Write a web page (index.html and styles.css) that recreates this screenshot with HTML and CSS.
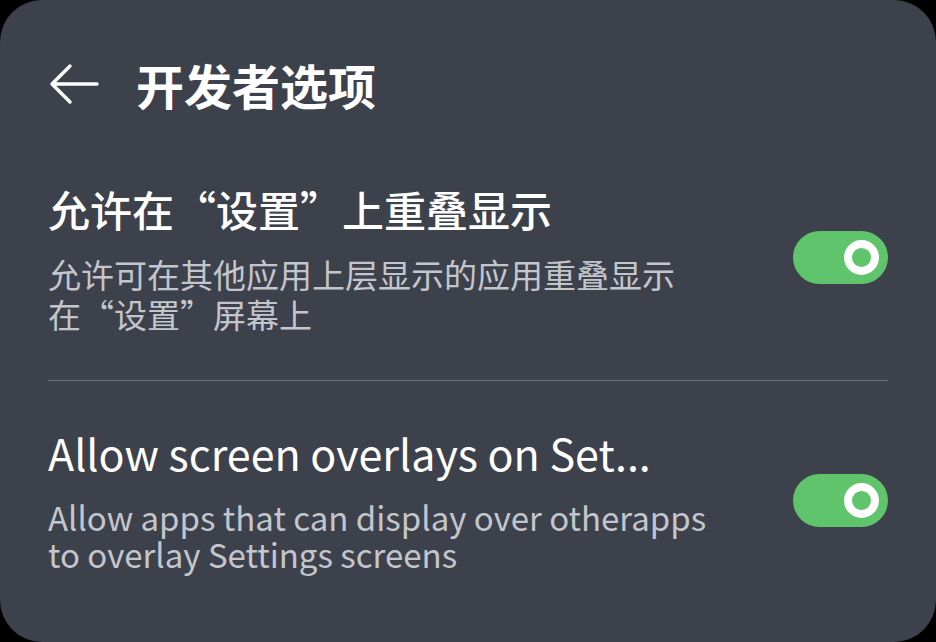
FILE: index.html
```html
<!DOCTYPE html>
<html lang="zh-CN">
<head>
<meta charset="utf-8">
<title>开发者选项</title>
<link rel="stylesheet" href="styles.css">
</head>
<body>
<div class="card">
  <header class="header">
    <svg class="back" width="50" height="42" viewBox="0 0 50 42" aria-hidden="true">
      <path d="M48 21H3M21 3L3 21L21 39" fill="none" stroke="#fff" stroke-width="3.4" stroke-linecap="round" stroke-linejoin="round"/>
    </svg>
    <h1 class="title">开发者选项</h1>
  </header>
  <div class="row row-first">
    <div class="text">
      <div class="row-title">允许在“设置”上重叠显示</div>
      <div class="row-sub">允许可在其他应用上层显示的应用重叠显示<br>在“设置”屏幕上</div>
    </div>
    <div class="toggle"><span class="knob"></span></div>
  </div>
  <div class="divider"></div>
  <div class="row row-second">
    <div class="text">
      <div class="row-title en">Allow screen overlays on Set...</div>
      <div class="row-sub en">Allow apps that can display over otherapps<br>to overlay Settings screens</div>
    </div>
    <div class="toggle"><span class="knob"></span></div>
  </div>
</div>
</body>
</html>
```
FILE: styles.css
```css
* { box-sizing: border-box; }
html, body {
  margin: 0;
  padding: 0;
  background: #000;
  width: 936px;
  height: 642px;
  overflow: hidden;
}
body {
  font-family: "Noto Sans CJK SC", "Noto Sans", sans-serif;
  color: #fff;
}
.card {
  width: 936px;
  height: 642px;
  background: #3d414c;
  border-radius: 42px;
  padding: 56px 48px 0 48px;
  display: flex;
  flex-direction: column;
}
.header {
  display: flex;
  align-items: center;
  height: 56px;
}
.back {
  margin-left: 1px;
  flex: none;
}
.title {
  margin: 0 0 0 37px;
  font-size: 48px;
  font-weight: 700;
  line-height: 56px;
}
.row {
  display: flex;
  align-items: flex-start;
  justify-content: space-between;
}
.row-first { margin-top: 71px; }
.row-second { margin-top: 45px; }
.row-title {
  font-size: 42px;
  line-height: 52px;
  font-weight: 500;
  color: #fff;
  white-space: nowrap;
}
.row-sub {
  margin-top: 19px;
  font-size: 33px;
  line-height: 40px;
  color: #c3c6cc;
}
.row-title.en { font-size: 43px; font-weight: 400; }
.row-sub.en { margin-top: 21px; font-size: 33px; line-height: 37px; }
.toggle {
  flex: none;
  width: 95px;
  height: 53px;
  margin-top: 48px;
  border-radius: 27px;
  background: #5fc46b;
  display: flex;
  align-items: center;
  justify-content: flex-end;
  padding-right: 9px;
}
.knob {
  width: 35px;
  height: 35px;
  border-radius: 50%;
  border: 8.5px solid #fff;
  background: #5fc46b;
}
.divider {
  margin-top: 46px;
  height: 1px;
  background: #6b6f79;
}
```
